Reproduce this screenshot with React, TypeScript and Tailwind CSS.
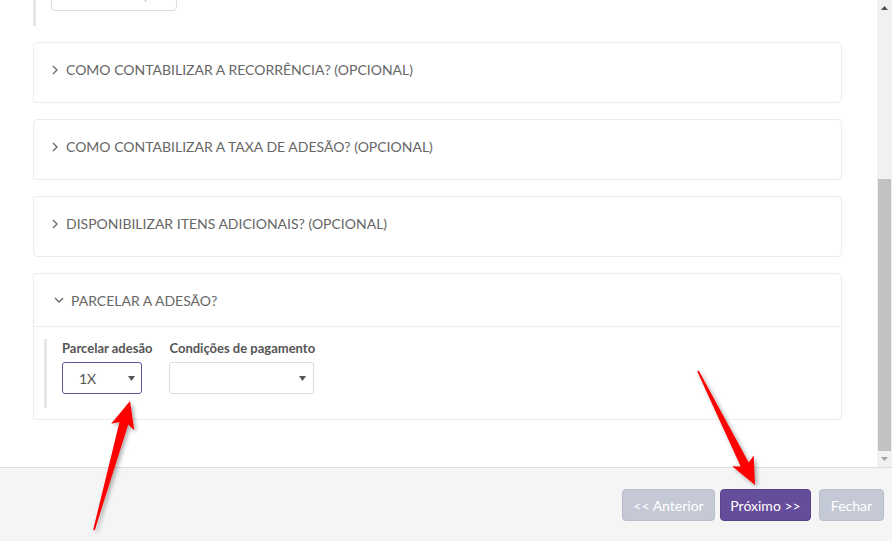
import React from "react";

type Pt = [number, number];

// monta o polígono de uma seta vermelha (cauda fina → ponta larga)
function arrowPoints(tail: Pt, tip: Pt, headLen: number, headHalf: number, shaftHalf: number) {
  const dx = tip[0] - tail[0];
  const dy = tip[1] - tail[1];
  const len = Math.sqrt(dx * dx + dy * dy);
  const ux = dx / len;
  const uy = dy / len;
  const nx = -uy;
  const ny = ux;
  const bx = tip[0] - ux * headLen;
  const by = tip[1] - uy * headLen;
  const pts: Pt[] = [
    tip,
    [bx + nx * headHalf, by + ny * headHalf],
    [bx + nx * shaftHalf + ux * 4, by + ny * shaftHalf + uy * 4],
    [tail[0] + nx * 0.8, tail[1] + ny * 0.8],
    [tail[0] - nx * 0.8, tail[1] - ny * 0.8],
    [bx - nx * shaftHalf + ux * 4, by - ny * shaftHalf + uy * 4],
    [bx - nx * headHalf, by - ny * headHalf],
  ];
  return pts.map((p) => `${p[0].toFixed(1)},${p[1].toFixed(1)}`).join(" ");
}

function Chevron({ open }: { open?: boolean }) {
  if (open) {
    return (
      <svg width="10" height="6" viewBox="0 0 10 6" className="mr-[7px]">
        <path d="M1 1 L5 5 L9 1" fill="none" stroke="#666" strokeWidth="1.3" />
      </svg>
    );
  }
  return (
    <svg width="6" height="10" viewBox="0 0 6 10" className="mr-[8px]">
      <path d="M1 1 L5 5 L1 9" fill="none" stroke="#666" strokeWidth="1.3" />
    </svg>
  );
}

function Collapsed({ title }: { title: string }) {
  return (
    <div className="h-[61px] rounded-[4px] border border-[#ececf0] bg-white flex items-center pl-[18px] pb-[6px] mb-[16px]">
      <Chevron />
      <span className="text-[14px] text-[#666]">{title}</span>
    </div>
  );
}

function Caret({ color = "#555" }: { color?: string }) {
  return (
    <svg width="7" height="5" viewBox="0 0 7 5">
      <path d="M0 0 H7 L3.5 5 Z" fill={color} />
    </svg>
  );
}

export default function App() {
  return (
    <div
      className="relative w-[892px] h-[541px] flex flex-col bg-white overflow-hidden"
      style={{ fontFamily: "Lato, 'Open Sans', sans-serif" }}
    >
      <div className="flex h-[467px]">
        <div className="flex-1 overflow-hidden pl-[33px] pr-[35px]">
          {/* trecho anterior, cortado no topo */}
          <div className="h-[26px] flex flex-col border-l-[3px] border-[#e6e6e6] pl-[15px] mb-[16px]">
            <div className="mt-[-21px] w-[126px] h-[32px] shrink-0 rounded-[4px] border border-[#ddd] flex items-end justify-end pr-[14px] pb-[5px] text-[13px] text-[#777]">
              0,00
            </div>
          </div>

          <Collapsed title="COMO CONTABILIZAR A RECORRÊNCIA? (OPCIONAL)" />
          <Collapsed title="COMO CONTABILIZAR A TAXA DE ADESÃO? (OPCIONAL)" />
          <Collapsed title="DISPONIBILIZAR ITENS ADICIONAIS? (OPCIONAL)" />

          <div className="rounded-[4px] border border-[#ececf0] bg-white">
            <div className="h-[53px] flex items-center pl-[20px] border-b border-[#ececf4]">
              <Chevron open />
              <span className="text-[14px] text-[#666]">PARCELAR A ADESÃO?</span>
            </div>
            <div className="pt-[12px] pb-[11px] pl-[10px]">
              <div className="border-l-[3px] border-[#e6e6e6] pl-[15px] h-[69px] flex gap-[17px]">
                <div className="flex flex-col">
                  <label className="text-[13px] font-bold text-[#555] leading-[16px] mt-[1px] mb-[6px]">Parcelar adesão</label>
                  <div className="w-[80px] h-[32px] rounded-[3px] border border-[#674f9d] flex items-center justify-between pl-[16px] pr-[6px]">
                    <span className="text-[14px] text-[#555]">1X</span>
                    <Caret />
                  </div>
                </div>
                <div className="flex flex-col">
                  <label className="text-[13px] font-bold text-[#555] leading-[16px] mt-[1px] mb-[6px]">Condições de pagamento</label>
                  <div className="w-[145px] h-[32px] rounded-[3px] border border-[#ddd] flex items-center justify-end pr-[7px]">
                    <Caret />
                  </div>
                </div>
              </div>
            </div>
          </div>
        </div>

        {/* barra de rolagem */}
        <div className="w-[15px] bg-[#f1f1f1] flex flex-col items-center">
          <div className="h-[15px] flex items-center justify-center">
            <svg width="7" height="4" viewBox="0 0 7 4">
              <path d="M0 4 H7 L3.5 0 Z" fill="#505050" />
            </svg>
          </div>
          <div className="h-[164px]" />
          <div className="w-[13px] h-[272px] bg-[#c1c1c1]" />
          <div className="h-[15px] flex items-center justify-center">
            <svg width="7" height="4" viewBox="0 0 7 4">
              <path d="M0 0 H7 L3.5 4 Z" fill="#a3a3a3" />
            </svg>
          </div>
        </div>
      </div>

      <div className="flex-1 bg-[#f5f5f5] border-t border-[#ddd] flex justify-end items-start pt-[21px] pr-[8px]">
        <button className="w-[93px] h-[32px] rounded-[4px] bg-[#c5c9d6] border border-[#b9bdca] text-white text-[14px]">
          &lt;&lt; Anterior
        </button>
        <button className="ml-[5px] w-[91px] h-[32px] rounded-[4px] bg-[#664d9b] border border-[#5a4389] text-white text-[14px]">
          Próximo &gt;&gt;
        </button>
        <button className="ml-[8px] w-[65px] h-[32px] rounded-[4px] bg-[#c5c9d6] border border-[#b9bdca] text-white text-[14px]">
          Fechar
        </button>
      </div>

      {/* setas de anotação sobre a captura */}
      <svg className="absolute inset-0 pointer-events-none" width="892" height="541" viewBox="0 0 892 541">
        <defs>
          <filter id="sh" x="-50%" y="-50%" width="200%" height="200%">
            <feDropShadow dx="2" dy="2" stdDeviation="2" floodColor="#000" floodOpacity="0.35" />
          </filter>
        </defs>
        <polygon points={arrowPoints([94, 530], [130, 401], 27, 12, 4.5)} fill="#ff0000" filter="url(#sh)" />
        <polygon points={arrowPoints([698, 371], [755, 485], 27, 12, 4.5)} fill="#ff0000" filter="url(#sh)" />
      </svg>
    </div>
  );
}
